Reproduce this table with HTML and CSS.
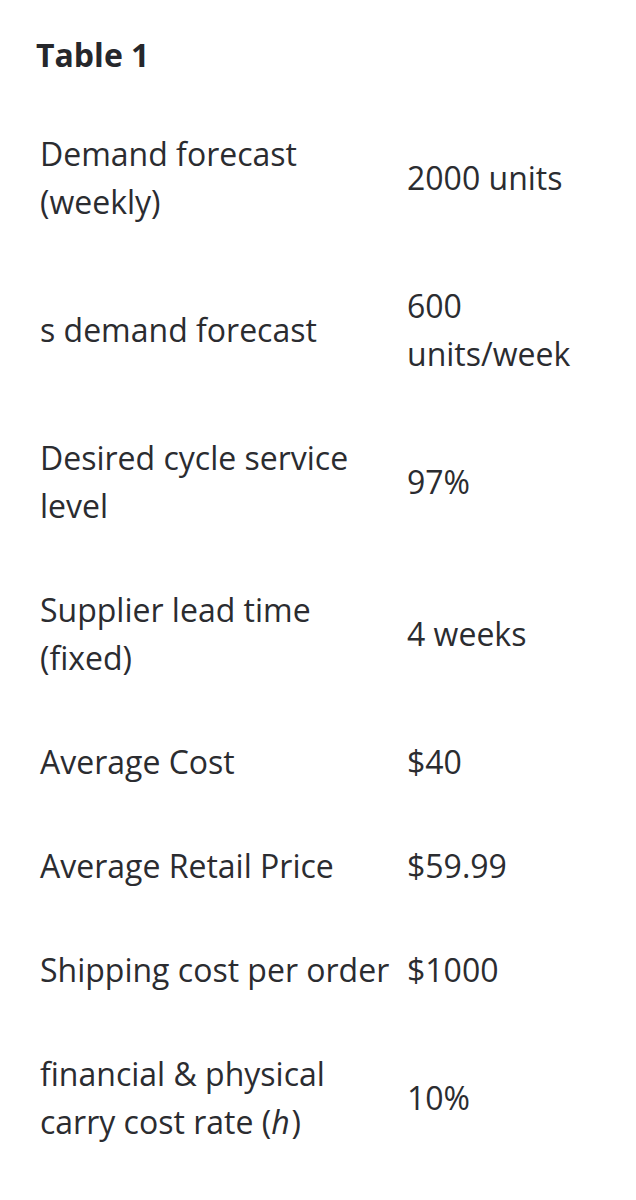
FILE: index.html
```html
<!DOCTYPE html>
<html>
<head>
<meta charset="utf-8">
<link rel="stylesheet" href="styles.css">
</head>
<body>
<div class="page">
  <h2 class="title">Table 1</h2>
  <table class="data">
    <tbody>
      <tr><td class="label">Demand forecast (weekly)</td><td class="value">2000 units</td></tr>
      <tr><td class="label">s demand forecast</td><td class="value">600 units/week</td></tr>
      <tr><td class="label">Desired cycle service level</td><td class="value">97%</td></tr>
      <tr><td class="label">Supplier lead time (fixed)</td><td class="value">4 weeks</td></tr>
      <tr><td class="label">Average Cost</td><td class="value">$40</td></tr>
      <tr><td class="label">Average Retail Price</td><td class="value">$59.99</td></tr>
      <tr><td class="label">Shipping cost per order</td><td class="value">$1000</td></tr>
      <tr><td class="label">financial &amp; physical carry cost rate (<i class="var">h</i>)</td><td class="value">10%</td></tr>
    </tbody>
  </table>
</div>
</body>
</html>
```

FILE: styles.css
```css
html, body {
  margin: 0;
  padding: 0;
  background: #ffffff;
}
body {
  font-family: "Open Sans", "Noto Sans", sans-serif;
  color: #2b2c30;
  font-size: 32px;
  line-height: 48px;
}
.page {
  padding: 31px 0 0 36px;
}
.title {
  margin: 0;
  font-size: 32px;
  line-height: 48px;
  font-weight: 700;
  color: #26272b;
}
.data {
  margin-top: 23px;
  border-collapse: collapse;
  border-spacing: 0;
}
.data td {
  padding: 28px 0;
  vertical-align: middle;
}
.data td.label {
  width: 355px;
  padding-left: 4px;
  padding-right: 12px;
}
.data td.value {
  width: 200px;
}
.var {
  padding-right: 2px;
}
```
